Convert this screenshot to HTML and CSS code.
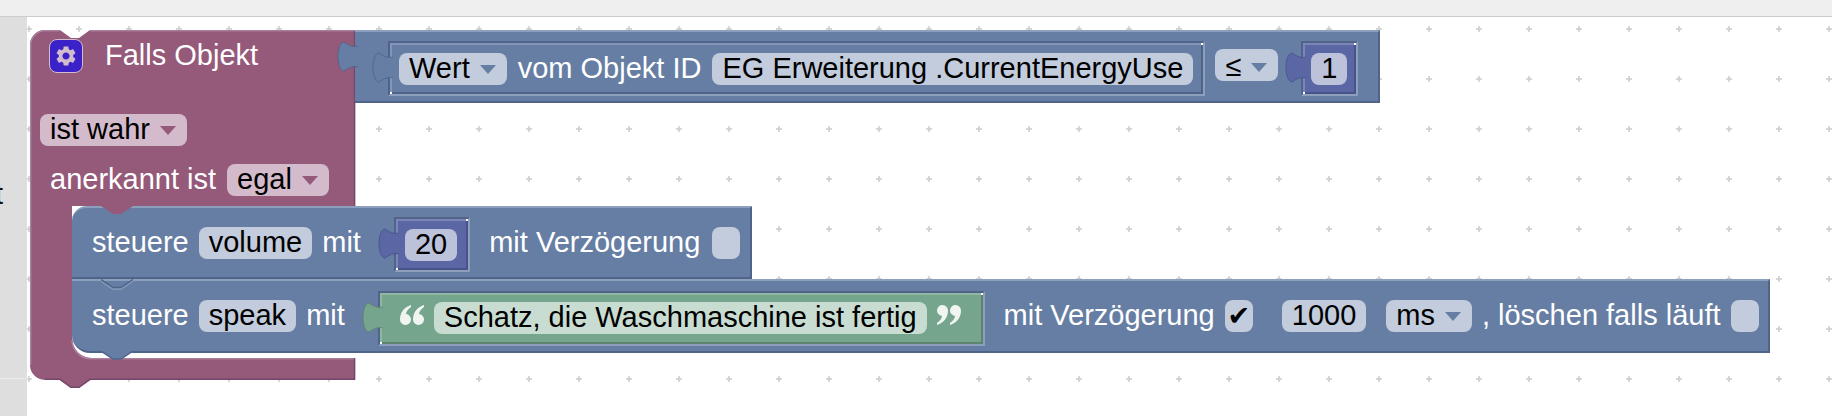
FILE: index.html
```html
<!DOCTYPE html>
<html lang="en">
<head>
    <meta charset="UTF-8">
    <title>Blockly Regel</title>
    <link rel="stylesheet" href="styles.css">
</head>
<body>

<div class="topbar"></div>

<div class="main">
    <aside class="side">
        <span class="side-text">t</span>
        <div class="side-line"></div>
    </aside>

    <div class="workspace">
        <svg class="grid" width="100%" height="100%">
            <defs>
                <pattern id="dots" x="-23" y="-13" width="50" height="50" patternUnits="userSpaceOnUse">
                    <rect x="22" y="24.25" width="6" height="1.5" fill="#ccc"/>
                    <rect x="24.25" y="22" width="1.5" height="6" fill="#ccc"/>
                </pattern>
            </defs>
            <rect width="100%" height="100%" fill="url(#dots)"/>
        </svg>

        <div class="hat">
            <svg class="hat-shape" width="326" height="360" viewBox="0 0 326 360">
                <path fill="#95597a" d="M0 15A15 15 0 0 1 15 0H30L41 8H49L60 0H325V176H42V308A20 20 0 0 0 62 328H325V350H60L49 358H41L30 350H15A15 15 0 0 1 0 335Z"/>
                <path fill="none" stroke="#ab7f99" stroke-width="1.5" d="M0.7 335V15A14.3 14.3 0 0 1 15 0.7H30M60 0.7H325M42 310A19 19 0 0 0 62 328.7H325"/>
                <path fill="none" stroke="#74476a" stroke-width="1.5" d="M324.6 1V176M324.6 328V349.3H60L49 357.3H41L30 349.3H15"/>
            </svg>

            <div class="hat-head">
                <span class="gear">
                    <svg viewBox="0 0 24 24" width="24" height="24">
                        <path fill="#d3bccb" d="M19.14 12.94c.04-.3.06-.61.06-.94 0-.32-.02-.64-.07-.94l2.03-1.58c.18-.14.23-.41.12-.61l-1.92-3.32c-.12-.22-.37-.29-.59-.22l-2.39.96c-.5-.38-1.03-.7-1.62-.94l-.36-2.54c-.04-.24-.24-.41-.48-.41h-3.84c-.24 0-.43.17-.47.41l-.36 2.54c-.59.24-1.13.57-1.62.94l-2.39-.96c-.22-.08-.47 0-.59.22L2.74 8.87c-.12.21-.08.47.12.61l2.03 1.58c-.05.3-.09.63-.09.94s.02.64.07.94l-2.03 1.58c-.18.14-.23.41-.12.61l1.92 3.32c.12.22.37.29.59.22l2.39-.96c.5.38 1.03.7 1.62.94l.36 2.54c.05.24.24.41.48.41h3.84c.24 0 .44-.17.47-.41l.36-2.54c.59-.24 1.13-.56 1.62-.94l2.39.96c.22.08.47 0 .59-.22l1.92-3.32c.12-.22.07-.47-.12-.61l-2.01-1.58zM12 15.6c-1.98 0-3.6-1.62-3.6-3.6s1.62-3.6 3.6-3.6 3.6 1.62 3.6 3.6-1.62 3.6-3.6 3.6z"/>
                    </svg>
                </span>
                <span class="label">Falls Objekt</span>
            </div>

            <div class="row hat-state">
                <span class="field purple">ist wahr<i class="arrow"></i></span>
            </div>
            <div class="row hat-ack">
                <span class="label">anerkannt ist</span>
                <span class="field purple">egal<i class="arrow"></i></span>
            </div>

            <!-- bedingung rechts am kopf -->
            <div class="block value-block">
                <svg class="tab" width="20" height="29" viewBox="0 0 17 28" preserveAspectRatio="none"><path d="M17 4C12 5 9 3 5 0C2 0 0 7 0 14C0 21 2 28 5 28C9 25 12 23 17 24"/></svg>
                <div class="slot blue obj-slot">
                    <svg class="tab" width="20" height="29" viewBox="0 0 17 28" preserveAspectRatio="none"><path d="M17 4C12 5 9 3 5 0C2 0 0 7 0 14C0 21 2 28 5 28C9 25 12 23 17 24"/></svg>
                    <span class="field">Wert<i class="arrow"></i></span>
                    <span class="label">vom Objekt ID</span>
                    <span class="field">EG Erweiterung .CurrentEnergyUse</span>
                </div>
                <span class="field op-field">≤<i class="arrow"></i></span>
                <div class="slot num one-slot">
                    <svg class="tab" width="20" height="29" viewBox="0 0 17 28" preserveAspectRatio="none"><path d="M17 4C12 5 9 3 5 0C2 0 0 7 0 14C0 21 2 28 5 28C9 25 12 23 17 24"/></svg>
                    <span class="field">1</span>
                </div>
            </div>

            <div class="stack">
                <div class="block stmt first">
                    <svg class="notch" width="34" height="10" viewBox="0 0 34 10"><path fill="#95597a" d="M0 0L12 8H20L32 0Z"/></svg>
                    <span class="label">steuere</span>
                    <span class="field">volume</span>
                    <span class="label">mit</span>
                    <div class="slot num vol-slot">
                        <svg class="tab" width="20" height="29" viewBox="0 0 17 28" preserveAspectRatio="none"><path d="M17 4C12 5 9 3 5 0C2 0 0 7 0 14C0 21 2 28 5 28C9 25 12 23 17 24"/></svg>
                        <span class="field">20</span>
                    </div>
                    <span class="label after-slot">mit Verzögerung</span>
                    <span class="check"></span>
                </div>

                <div class="block stmt last">
                    <svg class="notch" width="34" height="12" viewBox="0 0 34 12">
                        <path fill="none" stroke="#8c9fbd" stroke-width="1.5" d="M0 2L12 10H20L32 2"/>
                        <path fill="none" stroke="#50648a" stroke-width="1.5" d="M0 0.5L12 8.5H20L32 0.5"/>
                    </svg>
                    <span class="label">steuere</span>
                    <span class="field">speak</span>
                    <span class="label">mit</span>
                    <div class="slot green text-slot">
                        <svg class="tab" width="20" height="29" viewBox="0 0 17 28" preserveAspectRatio="none"><path d="M17 4C12 5 9 3 5 0C2 0 0 7 0 14C0 21 2 28 5 28C9 25 12 23 17 24"/></svg>
                        <svg class="quote" width="24" height="20" viewBox="0 0 24 20"><path d="M11 0C4 2 0 8 0 14.5A5.5 5.5 0 1 0 6 9C6 7 8 4 11 2ZM24 0C17 2 13 8 13 14.5A5.5 5.5 0 1 0 19 9C19 7 21 4 24 2Z"/></svg>
                        <span class="field">Schatz, die Waschmaschine ist fertig</span>
                        <svg class="quote" width="24" height="20" viewBox="0 0 24 20"><path transform="rotate(180 12 10)" d="M11 0C4 2 0 8 0 14.5A5.5 5.5 0 1 0 6 9C6 7 8 4 11 2ZM24 0C17 2 13 8 13 14.5A5.5 5.5 0 1 0 19 9C19 7 21 4 24 2Z"/></svg>
                    </div>
                    <span class="label after-slot">mit Verzögerung</span>
                    <span class="check">✔</span>
                    <span class="field delay">1000</span>
                    <span class="field unit">ms<i class="arrow"></i></span>
                    <span class="label">, löschen falls läuft</span>
                    <span class="check"></span>
                    <svg class="next" width="34" height="10" viewBox="0 0 34 10"><path fill="#667ea3" stroke="#50648a" stroke-width="1.5" d="M0 0L12 8H20L32 0"/></svg>
                </div>
            </div>
        </div>
    </div>
</div>

</body>
</html>
```

FILE: styles.css
```css
* {
    margin: 0;
    padding: 0;
    box-sizing: border-box;
}

html, body {
    height: 100%;
    overflow: hidden;
    background: #fff;
    font-family: "Liberation Sans", Arial, sans-serif;
    font-size: 29px;
}

.topbar {
    height: 17px;
    background: #efefef;
    border-bottom: 1px solid #ccc;
}

.main {
    display: flex;
    height: 399px;
}

.side {
    width: 27px;
    background: #dedede;
    overflow: hidden;
    padding-top: 161px;
    color: #111;
    line-height: 32px;
}

.side-text {
    display: block;
    margin-left: -5px;
}

.side-line {
    height: 1px;
    margin-top: 168px;
    background: #ebebeb;
}

.workspace {
    position: relative;
    flex: 1;
    overflow: hidden;
}

.grid {
    position: absolute;
    top: 0;
    left: 0;
}

/* block am canvas */
.hat {
    position: absolute;
    left: 3px;
    top: 13px;
    width: 325px;
    height: 358px;
    padding-top: 9px;
}

.hat-shape {
    position: absolute;
    top: 0;
    left: 0;
}

.hat-head {
    position: relative;
    display: flex;
    align-items: center;
    height: 34px;
    margin-left: 19px;
    gap: 22px;
    color: #fff;
}

.gear {
    display: flex;
    align-items: center;
    justify-content: center;
    width: 34px;
    height: 34px;
    background: #3a22c8;
    border: 1.5px solid #d3bccb;
    border-radius: 8px;
}

.row {
    position: relative;
    display: flex;
    align-items: center;
    gap: 11px;
}

.hat-state {
    margin: 41px 0 0 10px;
}

.hat-ack {
    margin: 18px 0 0 20px;
}

.label {
    height: 32px;
    line-height: 30px;
    color: #fff;
    white-space: nowrap;
}

.field {
    display: flex;
    align-items: center;
    height: 32px;
    line-height: 30px;
    padding: 0 10px 2px;
    border-radius: 8px;
    background: #c2ccdd;
    color: #000;
    white-space: nowrap;
}

.field.purple {
    background: #d4bbcb;
    --arrow: #95597a;
}

.arrow {
    width: 0;
    height: 0;
    margin: 3px 1px 0 10px;
    border-left: 8.5px solid transparent;
    border-right: 8.5px solid transparent;
    border-top: 9px solid var(--arrow, #667ea3);
}

.check {
    display: flex;
    align-items: center;
    justify-content: center;
    width: 28px;
    height: 32px;
    border-radius: 8px;
    background: #c2ccdd;
    color: #000;
    font-family: "DejaVu Sans", sans-serif;
    font-size: 27px;
    line-height: 32px;
}

.block {
    position: absolute;
    display: flex;
    align-items: center;
    background: #667ea3;
    border-top: 2px solid #8c9fbd;
    border-bottom: 2px solid #50648a;
    border-right: 2px solid #50648a;
    gap: 10px;
}

.tab {
    position: absolute;
    right: 100%;
    top: 10px;
    margin-right: -3px;
    overflow: visible;
    fill: var(--fill);
    stroke: var(--lo);
    stroke-width: 0.8;
}

.value-block {
    left: 325px;
    top: 0;
    height: 73px;
    padding-left: 33px;
    padding-right: 20px;
    gap: 0;
    --fill: #667ea3;
    --lo: #50648a;
}

/* eingesetzte blocke mit vertiefung */
.slot {
    position: relative;
    display: flex;
    align-items: center;
    gap: 11px;
    height: 55px;
    margin-top: 4px;
    background: var(--fill);
    border: 2px solid;
    border-color: #50648a #8c9fbd #8c9fbd #50648a;
    box-shadow: inset 2px 2px 0 var(--hi), inset -2px -2px 0 var(--lo);
}

.slot::before,
.slot::after {
    content: "";
    position: absolute;
    width: 2px;
    height: 2px;
    background: #fff;
}

.slot::before {
    top: 0;
    right: 0;
}

.slot::after {
    bottom: 0;
    left: 0;
}

.slot.blue {
    --fill: #667ea3;
    --hi: #8496b8;
    --lo: #50648a;
    padding: 0 10px 0 9px;
}

.slot.num {
    --fill: #5b67a5;
    --hi: #7c85b7;
    --lo: #49528a;
    padding: 0 11px 0 9px;
}

.slot.one-slot {
    padding: 0 9px 0 8px;
}

.slot.num .field {
    background: #bdc2db;
}

.slot.green {
    --fill: #75a58c;
    --hi: #90b7a3;
    --lo: #5e8470;
    padding: 0 22px 0 20px;
    gap: 10px;
}

.slot.green .field {
    background: #c8dcd1;
}

.quote {
    fill: #f0f5f2;
    margin-bottom: 6px;
}

.op-field {
    margin: 0 23px 0 10px;
    padding: 3px 10px 0;
    position: relative;
    top: -2px;
}

.stack {
    position: relative;
    margin: 10px 0 0 42px;
    width: max-content;
}

.stmt {
    position: relative;
    padding-left: 20px;
    padding-right: 9px;
    --fill: #667ea3;
    --lo: #50648a;
}

.stmt .slot {
    margin-left: 23px;
}

.first {
    height: 73px;
    width: max-content;
    padding-right: 10px;
    border-top-left-radius: 15px;
}

.first .check {
    margin-left: 2px;
}

.last {
    height: 74px;
    width: max-content;
    border-bottom-left-radius: 18px;
    z-index: 1;
}

.after-slot {
    margin-left: 9px;
}

.delay {
    margin-left: 19px;
}

.unit {
    margin-left: 10px;
}

.notch {
    position: absolute;
    left: 29px;
    top: -2px;
}

.next {
    position: absolute;
    left: 29px;
    top: 100%;
}
```
